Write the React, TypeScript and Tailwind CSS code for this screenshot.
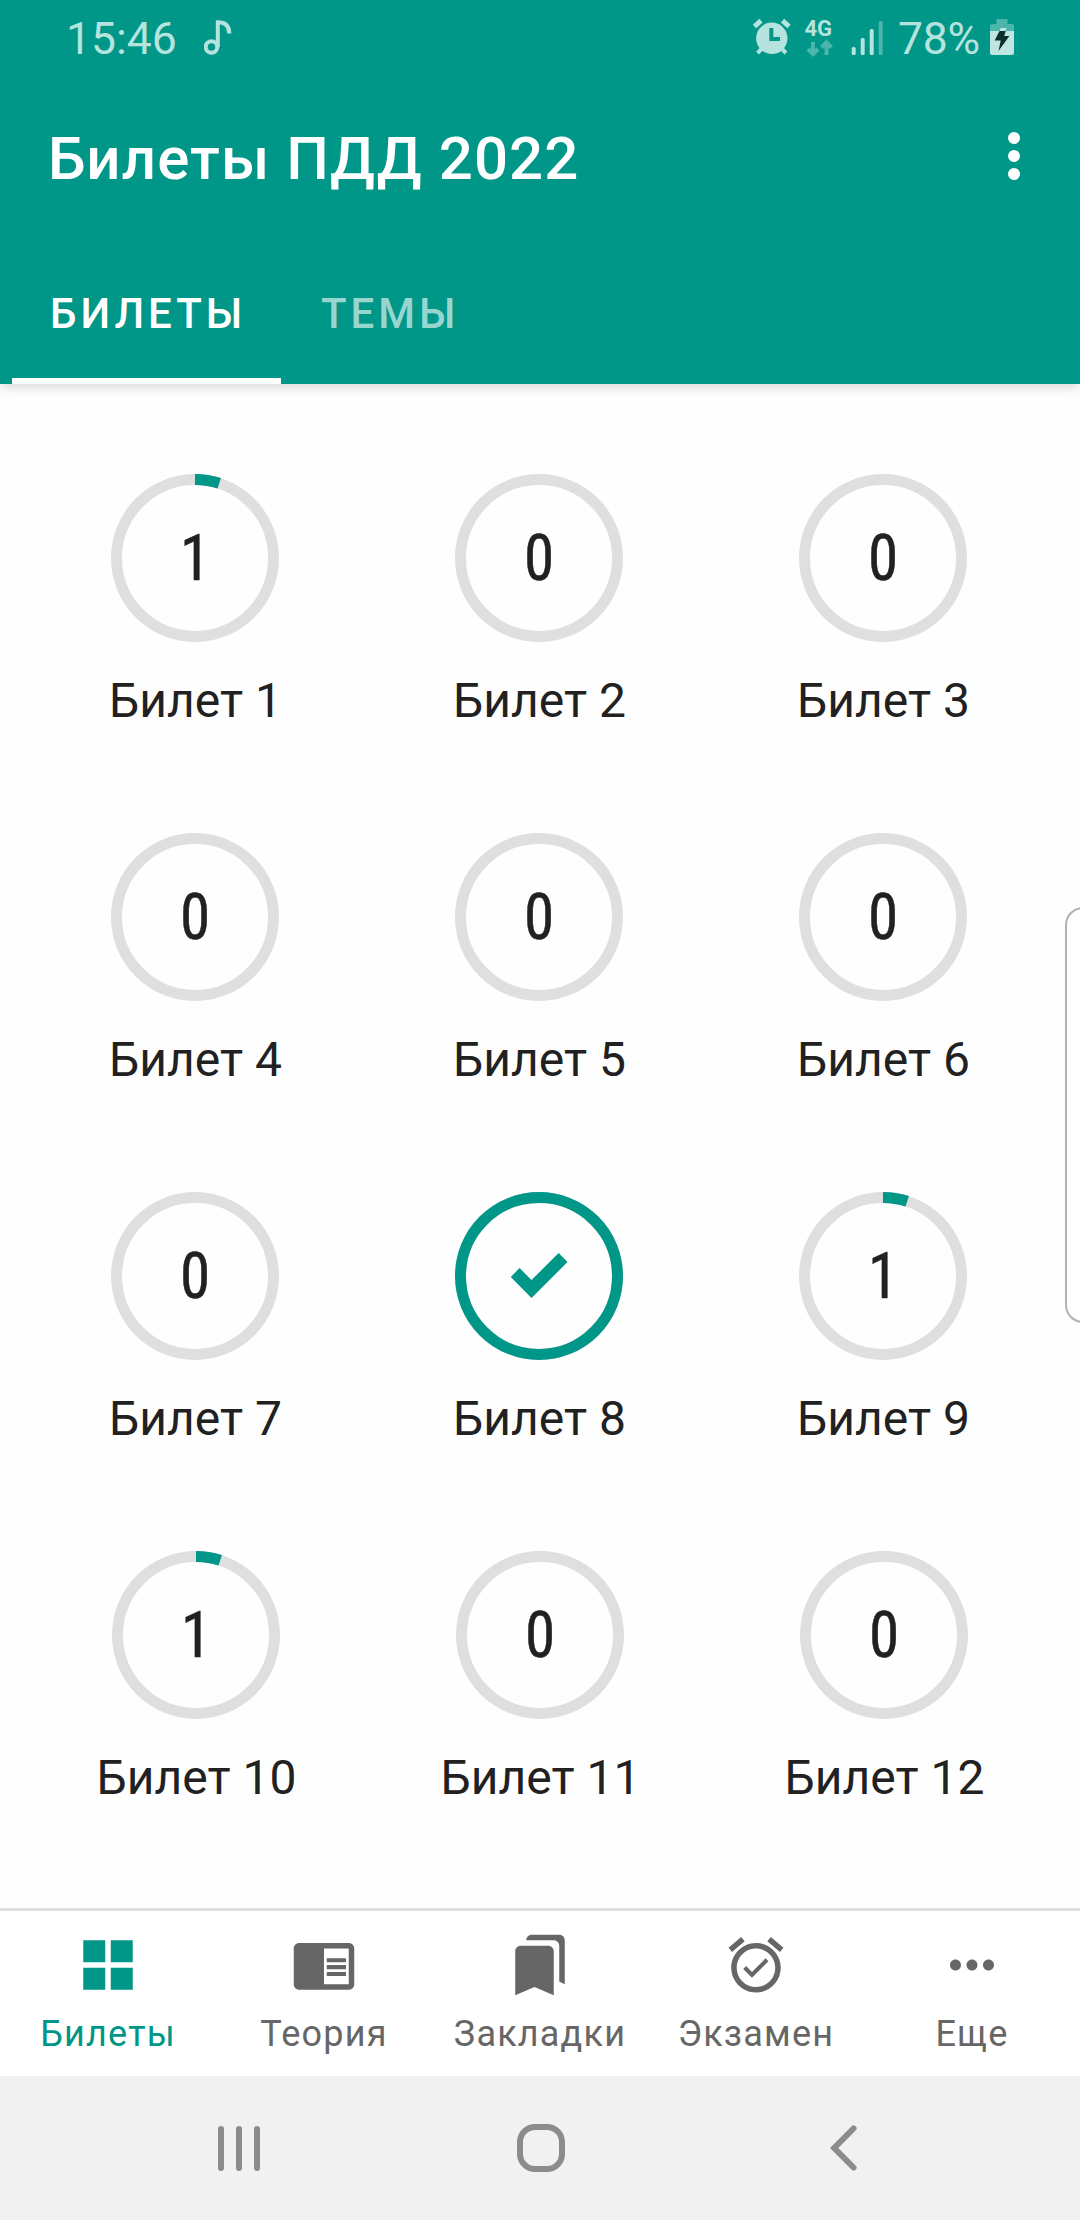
import React from 'react'

interface Ticket {
  id: number
  answered: number
  done?: boolean
}

interface NavItem {
  label: string
  path: string
  active?: boolean
}

const QUESTIONS_PER_TICKET = 20

const tickets: Ticket[] = [
  { id: 1, answered: 1 },
  { id: 2, answered: 0 },
  { id: 3, answered: 0 },
  { id: 4, answered: 0 },
  { id: 5, answered: 0 },
  { id: 6, answered: 0 },
  { id: 7, answered: 0 },
  { id: 8, answered: 20, done: true },
  { id: 9, answered: 1 },
  { id: 10, answered: 1 },
  { id: 11, answered: 0 },
  { id: 12, answered: 0 },
]

const navItems: NavItem[] = [
  {
    label: 'Билеты',
    path: 'M3 3h8v8H3zM13 3h8v8h-8zM3 13h8v8H3zM13 13h8v8h-8z',
    active: true,
  },
  {
    label: 'Теория',
    path: 'M13 12h7v1.5h-7zm0-2.5h7V11h-7zm0 5h7V16h-7zM21 4H3c-1.1 0-2 .9-2 2v13c0 1.1.9 2 2 2h18c1.1 0 2-.9 2-2V6c0-1.1-.9-2-2-2zm0 15h-9V6h9v13z',
  },
  {
    label: 'Закладки',
    path: 'M19 18l2 1V3c0-1.1-.9-2-2-2H8.99C7.89 1 7 1.9 7 3h10c1.1 0 2 .9 2 2v13zM15 5H5c-1.1 0-2 .9-2 2v16l7-3 7 3V7c0-1.1-.9-2-2-2z',
  },
  {
    label: 'Экзамен',
    path: 'M22 5.72l-4.6-3.86-1.29 1.53 4.6 3.86L22 5.72zM7.88 3.39L6.6 1.86 2 5.71l1.29 1.53 4.59-3.85zM12 4c-4.97 0-9 4.03-9 9s4.02 9 9 9c4.97 0 9-4.03 9-9s-4.03-9-9-9zm0 16c-3.87 0-7-3.13-7-7s3.13-7 7-7 7 3.13 7 7-3.13 7-7 7zm-1.46-5.47L8.41 12.4l-1.06 1.06 3.18 3.18 6-6-1.06-1.06-4.93 4.95z',
  },
  {
    label: 'Еще',
    path: 'M6 10c-1.1 0-2 .9-2 2s.9 2 2 2 2-.9 2-2-.9-2-2-2zm12 0c-1.1 0-2 .9-2 2s.9 2 2 2 2-.9 2-2-.9-2-2-2zm-6 0c-1.1 0-2 .9-2 2s.9 2 2 2 2-.9 2-2-.9-2-2-2z',
  },
]

const StatusBar: React.FC = () => (
  <div className="flex h-[72px] items-center justify-between px-[66px] text-[#b5e3de]">
    <div className="flex h-full items-center">
      <span className="w-[138px] pt-[6px] text-[44.5px] leading-none">15:46</span>
      <svg width="28" height="72" viewBox="204 0 28 72" fill="none" stroke="currentColor" strokeWidth="4">
        <circle cx="211.5" cy="47" r="5.8" />
        <path d="M217.8 47V22.2c6.5 0 11.5 3 11.5 11.3" />
      </svg>
    </div>

    <div className="flex h-full items-center">
      <svg width="148" height="72" viewBox="750 0 148 72">
        {/* Alarm clock */}
        <g stroke="currentColor" strokeWidth="5">
          <path d="M754.5 26.5l6.5-5.8M789 26.5l-6.5-5.8" />
          <path d="M757.5 53l5-5M786 53l-5-5" strokeWidth="4" />
        </g>
        <circle cx="771.8" cy="38.3" r="15.7" fill="currentColor" />
        <path d="M771.3 28v11h8.7" fill="none" stroke="#009688" strokeWidth="4" />

        {/* Mobile data */}
        <text x="804.5" y="36" fontSize="22" fontWeight="700" fill="currentColor">
          4G
        </text>
        <g fill="none" stroke="#4db6ac" strokeWidth="4">
          <path d="M813 42v12M808 49l5 5.2 5-5.2M826.5 55V43M821.5 47.5l5-5.2 5 5.2" />
        </g>

        {/* Signal strength */}
        <g fill="currentColor">
          <rect x="851.7" y="47" width="4" height="8" rx="1.5" />
          <rect x="860.7" y="38" width="4" height="17" rx="1.5" />
          <rect x="869.7" y="29" width="4" height="26" rx="1.5" />
          <rect x="878.7" y="21" width="4" height="34" rx="1.5" fill="#4db6ac" />
        </g>
      </svg>
      <span className="w-[91px] whitespace-nowrap pt-[6px] text-[44.5px] leading-none tracking-[-0.3px]">78%</span>
      <svg width="25" height="72" viewBox="989 0 25 72">
        <path d="M996.5 19h11v5h4.5q2 0 2 2v5h-24v-5q0-2 2-2h4.5z" fill="#4db6ac" />
        <path d="M990 31h24v22q0 2-2 2h-20q-2 0-2-2z" fill="#bfe6e2" />
        <path d="M1000.5 28h6l-1 3h-6z" fill="#bfe6e2" />
        <path d="M999.5 31h6.3l-1.6 5h5.2l-10.9 15 2.2-10.5h-6z" fill="#0f2f2c" />
      </svg>
    </div>
  </div>
)

const Header: React.FC = () => (
  <header className="relative z-10 h-[384px] shrink-0 bg-[#009688] text-white shadow-[0_2px_12px_rgba(0,0,0,0.18)]">
    <StatusBar />
    <div className="flex h-[168px] items-center justify-between pl-12 pr-[60px]">
      <h1 className="pt-[6px] text-[60px] font-medium leading-none tracking-[1.1px]">Билеты ПДД 2022</h1>
      <button className="flex flex-col gap-[6px]" aria-label="Меню">
        <span className="size-3 rounded-full bg-white" />
        <span className="size-3 rounded-full bg-white" />
        <span className="size-3 rounded-full bg-white" />
      </button>
    </div>
    <nav className="flex h-36 pl-3 text-[42px] font-medium leading-none tracking-[4px]">
      <button className="flex h-full w-[269px] flex-col items-start border-b-6 border-white pl-[38px] pt-[53px]">
        БИЛЕТЫ
      </button>
      <button className="flex h-full flex-col items-start pl-10 pt-[53px] text-[#99d5cf]">ТЕМЫ</button>
    </nav>
  </header>
)

const ProgressRing: React.FC<{ ticket: Ticket }> = ({ ticket }) => {
  const radius = 78.5
  const length = 2 * Math.PI * radius
  const filled = (ticket.answered / QUESTIONS_PER_TICKET) * length

  return (
    <div className="grid size-[168px] place-items-center">
      <svg className="col-start-1 row-start-1" width="168" height="168" viewBox="0 0 168 168" fill="none">
        <circle cx="84" cy="84" r={radius} stroke="#dfdfdf" strokeWidth="11" />
        {ticket.answered > 0 && (
          <circle
            cx="84"
            cy="84"
            r={radius}
            stroke="#009688"
            strokeWidth="11"
            strokeDasharray={`${filled} ${length}`}
            transform="rotate(-90 84 84)"
          />
        )}
        {ticket.done && (
          <path d="M64.5 76l-8.7 9L76.5 106l36-36-8.8-9L76.5 88z" fill="#009688" />
        )}
      </svg>
      {!ticket.done && (
        <span className="col-start-1 row-start-1 scale-x-[0.94] text-[65px] leading-none [-webkit-text-stroke:0.5px_#212121] [font-family:'Roboto_Condensed',Roboto,sans-serif]">
          {ticket.answered}
        </span>
      )}
    </div>
  )
}

const TicketGrid: React.FC = () => (
  <main className="grid h-[1524px] shrink-0 auto-rows-[359px] grid-cols-[344px_344px_344px] content-start pl-[23px] pt-[90px]">
    {tickets.map((ticket) => (
      <button key={ticket.id} className={`flex flex-col items-center ${ticket.id > 9 ? 'pl-[2px]' : ''}`}>
        <ProgressRing ticket={ticket} />
        <span className="mt-[35px] pl-px text-[48px] leading-none">Билет {ticket.id}</span>
      </button>
    ))}
  </main>
)

const BottomNav: React.FC = () => (
  <nav className="grid h-[168px] shrink-0 grid-cols-5 border-t-3 border-[#e0e0e0] bg-white">
    {navItems.map((item) => (
      <button
        key={item.label}
        className={`flex flex-col items-center pt-[21px] ${item.active ? 'text-[#009688]' : 'text-[#666666]'}`}
      >
        <svg width="66" height="66" viewBox="0 0 24 24" fill="currentColor">
          <path d={item.path} />
        </svg>
        <span className="mt-[18px] text-[36px] leading-none tracking-[1.2px]">{item.label}</span>
      </button>
    ))}
  </nav>
)

const SystemNav: React.FC = () => (
  <div className="flex h-36 shrink-0 items-center bg-[#f1f1f1] pl-[218px] text-[#8c8c8c]">
    <div className="flex w-[299px] gap-3">
      <span className="h-[45px] w-[6px] rounded-full bg-current" />
      <span className="h-[45px] w-[6px] rounded-full bg-current" />
      <span className="h-[45px] w-[6px] rounded-full bg-current" />
    </div>
    <div className="size-12 rounded-[18px] border-6 border-current" />
    <svg className="ml-[263px]" width="30" height="48" viewBox="0 0 30 48" fill="none" stroke="currentColor">
      <path d="M25.5 4.5L6.2 24l19.3 19.5" strokeWidth="6" strokeLinecap="round" />
    </svg>
  </div>
)

export default function App() {
  return (
    <div className="relative flex h-[2220px] w-[1080px] flex-col overflow-hidden bg-[#fefefe] text-[#212121] [font-family:Roboto,sans-serif]">
      <Header />
      <TicketGrid />
      <BottomNav />
      <SystemNav />

      {/* Edge panel handle */}
      <div className="absolute -right-8 top-[907px] h-[416px] w-[47px] rounded-[18px] border-2 border-[#b2b2b2] bg-white" />
    </div>
  )
}
